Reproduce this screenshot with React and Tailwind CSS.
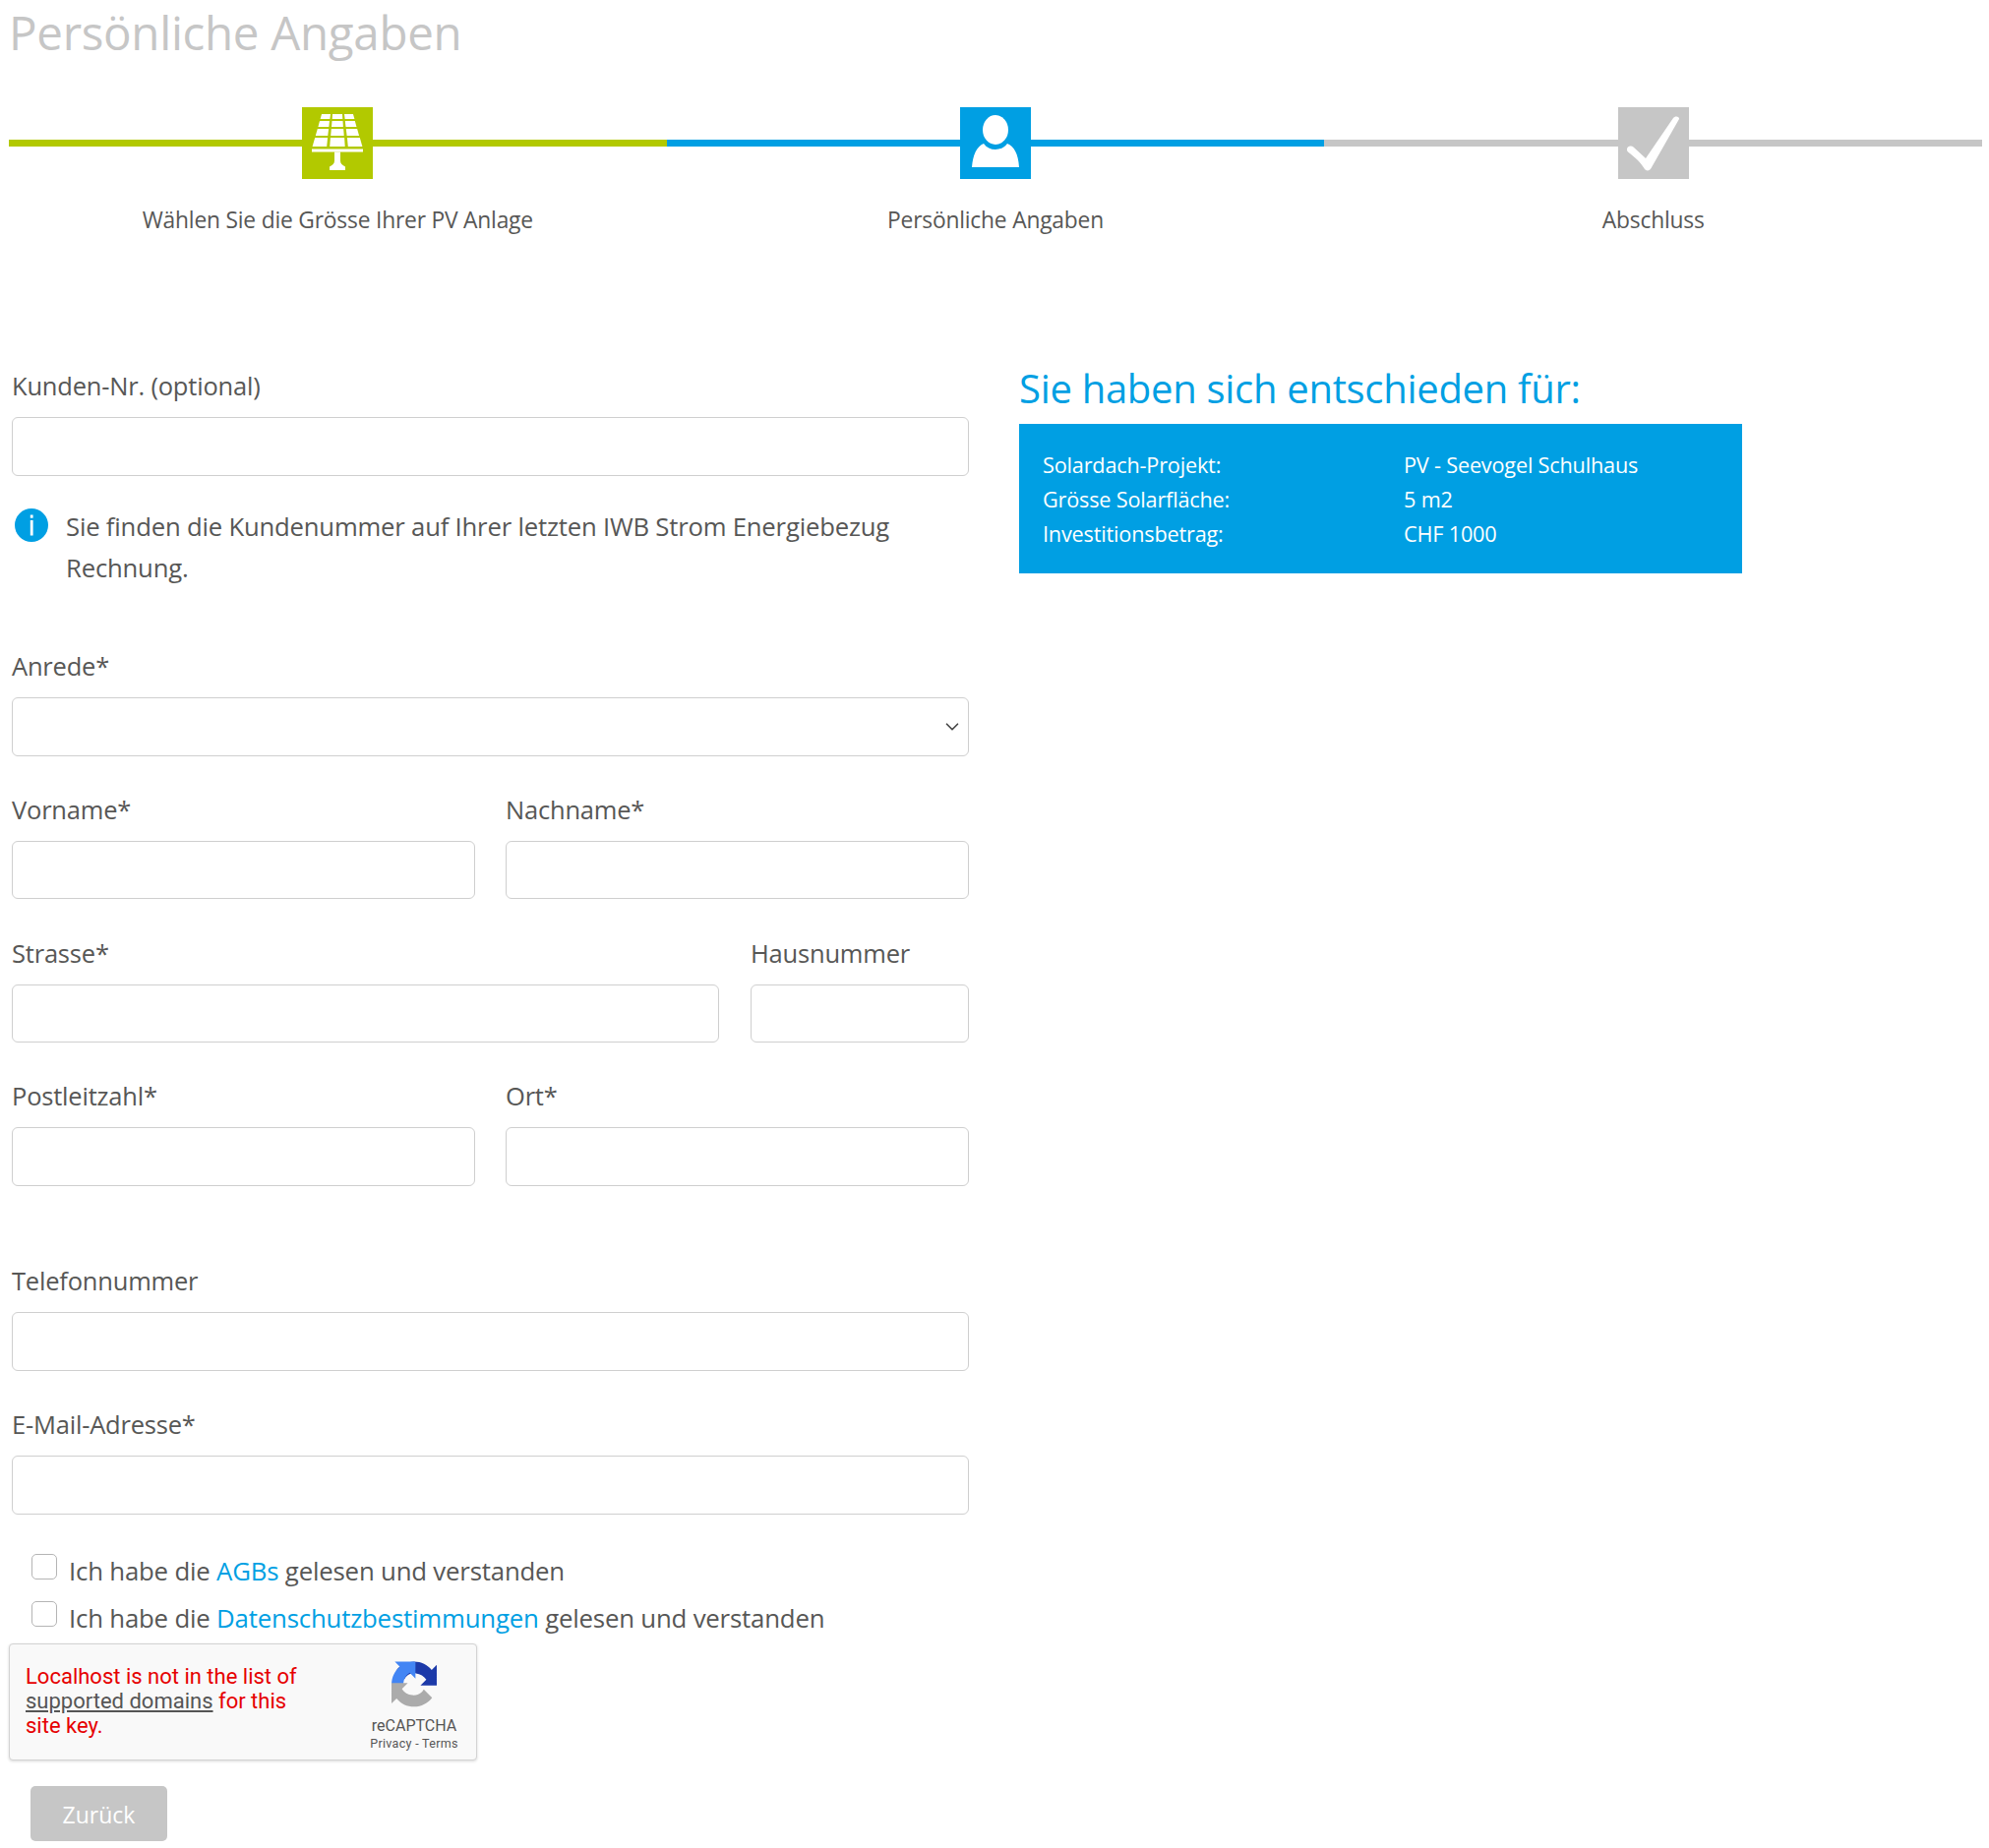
import { ChevronDown } from 'lucide-react'

const FONT = "font-['Open_Sans',sans-serif]"

function SolarIcon() {
  return (
    <svg width="56" height="62" viewBox="0 0 56 62" fill="#fff">
      <path d="M12 1h9l-.6 5H10.6z" />
      <path d="M23 1h10l.3 5H22.7z" />
      <path d="M35 1h9l1.4 5H35.6z" />
      <path d="M10 8h10l-.7 6H8.4z" />
      <path d="M22.5 8h11l.4 6H22z" />
      <path d="M35.8 8h10l1.7 6H36.5z" />
      <path d="M7.8 16h11.3l-.8 7H5.8z" />
      <path d="M21.8 16h12.4l.5 7H21.2z" />
      <path d="M36.8 16h11.3l2 7H37.6z" />
      <path d="M5.2 25h12.9l-.9 9H2.6z" />
      <path d="M20.9 25h14.2l.6 9H20.2z" />
      <path d="M37.9 25h12.9l2.6 9H38.8z" />
      <rect x="2" y="36.5" width="52" height="3" />
      <path d="M25 39.5h6v9c0 3 2 4 5 6v3.5H20v-3.5c3-2 5-3 5-6z" />
    </svg>
  )
}

function PersonIcon() {
  return (
    <svg width="50" height="58" viewBox="0 0 50 58" fill="#fff">
      <ellipse cx="25" cy="15" rx="13" ry="15" />
      <path d="M13 29c3 4 7 6 12 6s9-2 12-6c7 3 11 10 12 24H1C2 40 6 32 13 29z" />
    </svg>
  )
}

function CheckIcon() {
  return (
    <svg width="72" height="73" viewBox="0 0 72 73" fill="#fff">
      <path d="M9.500 41c1.500-2 4.500-2 6-.5l12.500 11.500 28-41c1.500-2.500 6.500-2 6 1L33.500 62c-1.500 3-5 3-6.500 1C23 56 16 50 10 45.500c-1.200-1-1.500-3-.5-4.500z" />
    </svg>
  )
}

function InfoIcon() {
  return (
    <svg width="34" height="34" viewBox="0 0 34 34" className="shrink-0 ml-[3px] mt-[2px]">
      <circle cx="17" cy="17" r="17" fill="#009fe3" />
      <rect x="15.800" y="6.500" width="2.800" height="3.200" fill="#fff" />
      <rect x="15.800" y="12" width="2.800" height="15.500" fill="#fff" />
    </svg>
  )
}

function StepLine({ color }) {
  return <div className={`flex-1 h-[7px] ${color}`} />
}

function Step({ color, label, icon }) {
  return (
    <div className="flex-1 flex flex-col">
      <div className="flex items-center h-[73px]">
        <StepLine color={color} />
        <div className={`w-[72px] h-[73px] flex items-center justify-center ${color}`}>{icon}</div>
        <StepLine color={color} />
      </div>
      <div className="mt-[22px] text-center text-[22.8px] leading-[40px] tracking-[-0.2px] text-[#575756]">{label}</div>
    </div>
  )
}

function Field({ label, className = '', inputHeight = 'h-[60px]' }) {
  return (
    <div className={className}>
      <label className="block text-[25.5px] leading-[34px] mb-[15px] tracking-[-0.2px] text-[#575756]">{label}</label>
      <input type="text" className={`block w-full border border-[#cfcfcf] rounded-[6px] bg-white px-3 ${inputHeight}`} />
    </div>
  )
}

function RecaptchaLogo() {
  return (
    <svg width="46" height="47" viewBox="0 0 64 64">
      <path fill="#1c3aa9" d="M64 31.955l-.033-1.37V4.687l-7.16 7.16C50.948 4.674 42.033.093 32.05.093c-10.4 0-19.622 4.96-25.458 12.64l11.736 11.86a15.55 15.55 0 0 1 4.754-5.334c2.05-1.6 4.952-2.906 9.968-2.906.606 0 1.074.07 1.418.2 6.215.49 11.602 3.92 14.776 8.9l-8.307 8.307c10.522-.04 22.41-.066 23.062 0" />
      <path fill="#4285f4" d="M31.955.001l-1.37.033H4.687l7.16 7.16C4.674 13.05.093 21.967.093 31.95l16.46-.002c0-.606.07-1.074.2-1.418.49-6.215 3.92-11.602 8.9-14.776l8.307 8.307c-.04-10.522-.066-22.41 0-23.062" />
      <path fill="#ababab" d="M.002 31.955l.033 1.37v25.9l7.16-7.16c5.857 7.173 14.772 11.754 24.755 11.754 10.39 0 19.622-4.96 25.458-12.64l-11.736-11.86a15.55 15.55 0 0 1-4.754 5.334c-2.05 1.6-4.952 2.906-9.968 2.906-.606 0-1.074-.07-1.418-.2-6.215-.49-11.602-3.92-14.776-8.9l8.307-8.307c-10.522.04-22.41.066-23.062 0" />
    </svg>
  )
}

function Recaptcha() {
  return (
    <div className="w-[476px] h-[119px] flex border border-[#d3d3d3] rounded-[4px] bg-[#f9f9f9] shadow-[0_1px_3px_rgba(0,0,0,0.15)] font-['Roboto',sans-serif]">
      <div className="w-[359px] pl-[16px] pt-[20px] text-[22px] leading-[25px] text-[#e60000]">
        Localhost is not in the list of<br />
        <span className="text-[#555] underline">supported domains</span> for this<br />
        site key.
      </div>
      <div className="w-[104px] flex flex-col items-center pt-[17px] text-[#555]">
        <RecaptchaLogo />
        <div className="mt-[9px] text-[16px] leading-[20px]">reCAPTCHA</div>
        <div className="text-[12.5px] leading-[16px] tracking-[0.3px] whitespace-nowrap">Privacy - Terms</div>
      </div>
    </div>
  )
}

function Consent({ children }) {
  return (
    <div className="flex pl-[20px] h-[48px]">
      <input type="checkbox" className="appearance-none w-[26px] h-[26px] mt-[7px] border border-[#b5b5b5] rounded-[5px] bg-white" />
      <span className="ml-[12px] text-[25.8px] leading-[48px] tracking-[-0.2px] text-[#575756]">{children}</span>
    </div>
  )
}

export default function App() {
  return (
    <div className={`h-[1879px] bg-white overflow-hidden ${FONT}`}>
      <h1 className="pl-[9px] h-[66px] text-[47.5px] leading-[66px] tracking-[-0.3px] text-[#c6c6c6]">Persönliche Angaben</h1>

      <div className="mt-[43px] mx-[7px] pl-[2px] flex">
        <Step color="bg-[#b2c900]" label="Wählen Sie die Grösse Ihrer PV Anlage" icon={<SolarIcon />} />
        <Step color="bg-[#009fe3]" label="Persönliche Angaben" icon={<PersonIcon />} />
        <Step color="bg-[#c6c6c6]" label="Abschluss" icon={<CheckIcon />} />
      </div>

      <div className="mt-[127px] flex">
        <div className="w-[973px] ml-[12px] pt-[4px]">
          <Field label="Kunden-Nr. (optional)" />

          <div className="mt-[31px] flex">
            <InfoIcon />
            <p className="ml-[18px] w-[860px] text-[25.7px] leading-[42px] tracking-[-0.2px] text-[#575756]">
              Sie finden die Kundenummer auf Ihrer letzten IWB Strom Energiebezug Rechnung.
            </p>
          </div>

          <div className="mt-[61px] mb-[37px]">
            <label className="block text-[25.5px] leading-[34px] mb-[15px] tracking-[-0.2px] text-[#575756]">Anrede*</label>
            <div className="relative">
              <select className="block w-full h-[60px] appearance-none border border-[#cfcfcf] rounded-[6px] bg-white px-3">
                <option value=""></option>
              </select>
              <ChevronDown className="absolute right-[6px] top-[19px] text-[#444]" size={22} strokeWidth={1.8} />
            </div>
          </div>

          <div className="flex gap-[31px] mb-[38px]">
            <Field label="Vorname*" className="flex-1" inputHeight="h-[59px]" />
            <Field label="Nachname*" className="flex-1" inputHeight="h-[59px]" />
          </div>
          <div className="flex gap-[32px] mb-[37px]">
            <Field label="Strasse*" className="w-[719px]" inputHeight="h-[59px]" />
            <Field label="Hausnummer" className="flex-1" inputHeight="h-[59px]" />
          </div>
          <div className="flex gap-[31px] mb-[79px]">
            <Field label="Postleitzahl*" className="flex-1" />
            <Field label="Ort*" className="flex-1" />
          </div>

          <Field label="Telefonnummer" className="mb-[37px]" />
          <Field label="E-Mail-Adresse*" className="mb-[33px]" />

          <Consent>
            Ich habe die <a href="#agb" className="text-[#009fe3]">AGBs</a> gelesen und verstanden
          </Consent>
          <Consent>
            Ich habe die <a href="#ds" className="text-[#009fe3]">Datenschutzbestimmungen</a> gelesen und verstanden
          </Consent>

          <div className="-ml-[3px] mt-[2px]">
            <Recaptcha />
          </div>

          <button type="button" className="block ml-[19px] mt-[26px] w-[139px] h-[56px] pt-[3px] rounded-[5px] bg-[#c6c6c6] text-white text-[23px]">
            Zurück
          </button>
        </div>

        <div className="ml-[51px] w-[735px]">
          <h2 className="h-[60px] text-[40px] leading-[48px] tracking-[-0.3px] text-[#009fe3]">Sie haben sich entschieden für:</h2>
          <div className="h-[152px] pt-[24px] pl-[24px] bg-[#009fe3] text-white text-[21.7px] leading-[35px] tracking-[-0.2px]">
            <div className="grid grid-cols-[367px_1fr]">
              <div>Solardach-Projekt:</div>
              <div>PV - Seevogel Schulhaus</div>
              <div>Grösse Solarfläche:</div>
              <div>5 m2</div>
              <div>Investitionsbetrag:</div>
              <div>CHF 1000</div>
            </div>
          </div>
        </div>
      </div>
    </div>
  )
}
